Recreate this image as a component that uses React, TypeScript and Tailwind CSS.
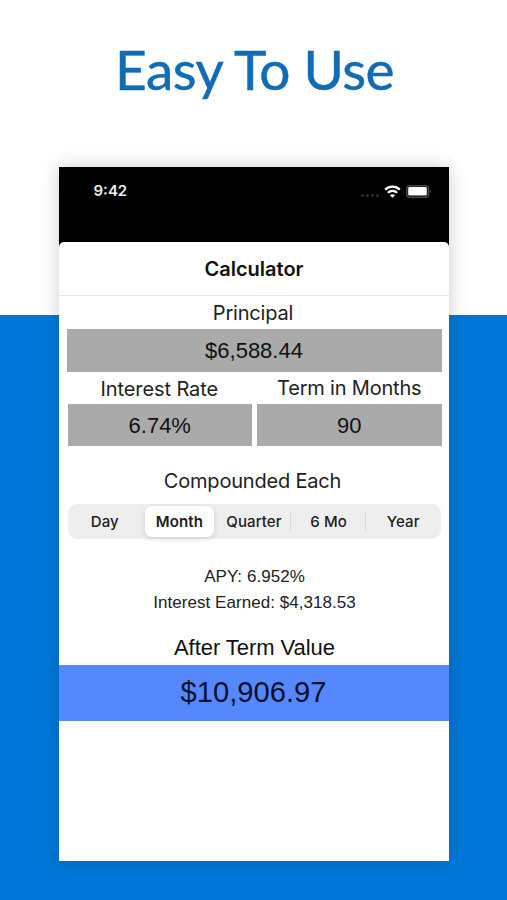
const periods = ['Day', 'Month', 'Quarter', '6 Mo', 'Year']

const sf = "font-['Inter','Liberation_Sans',sans-serif]"
const helvetica = "font-['Liberation_Sans',sans-serif]"

function StatusBar() {
  return (
    <div className="h-[83px] shrink-0 bg-black px-[18px] pt-[15px] text-white">
      <div className="flex h-[19px] items-center justify-between pl-[17px]">
        <span className={`${sf} text-[15px] font-semibold text-[#eee]`}>9:42</span>
        <div className="flex items-center">
          <div className="mt-[8px] mr-[5px] flex gap-[2px]">
            {[0, 1, 2, 3].map((dot) => (
              <span key={dot} className="size-[3px] rounded-full bg-[#303030]" />
            ))}
          </div>
          <svg className="h-[13px] w-[17px]" viewBox="0 0 17 13" fill="none" stroke="currentColor" strokeWidth="2.3">
            <path d="M1.2 4.6C5.3 .6 11.7 .6 15.8 4.6" />
            <path d="M3.9 7.8C6.5 5.2 10.5 5.2 13.1 7.8" />
            <path d="M8.5 12.8L6 10.2C7.4 8.8 9.6 8.8 11 10.2Z" fill="currentColor" stroke="none" />
          </svg>
          <svg className="ml-[5px] h-[13px] w-[25px]" viewBox="0 0 25 13" fill="none">
            <rect x=".8" y=".8" width="21.6" height="11.4" rx="3" stroke="#484848" strokeWidth="1.5" />
            <rect x="2.2" y="2" width="18.6" height="8.6" rx="1.4" fill="#fff" />
            <path d="M23.6 4.6C25 5.2 25 7.8 23.6 8.4Z" fill="#555" />
          </svg>
        </div>
      </div>
    </div>
  )
}

interface FieldProps {
  label: string
  value: string
  labelClass: string
}

function Field({ label, value, labelClass }: FieldProps) {
  return (
    <div className="flex flex-1 flex-col text-center">
      <div className={`${sf} h-8 text-[20px] text-[#222] ${labelClass}`}>{label}</div>
      <div className={`${helvetica} h-[42.5px] bg-[#aaa] text-[22px] leading-[44px] text-[#111]`}>{value}</div>
    </div>
  )
}

function PeriodPicker() {
  return (
    <div className="mr-2 ml-[9px] flex h-[35px] items-center rounded-[9px] bg-[#eeeeef]">
      {periods.map((period, i) => (
        <div
          key={period}
          className={`${sf} relative flex h-[31px] flex-1 items-center justify-center text-[15px] tracking-[0.1px] text-[#1c1c1c]`}
        >
          {period === 'Month' ? (
            <span className="flex h-[31px] w-[69px] items-center justify-center rounded-[7px] bg-white pt-[2px] font-semibold shadow-[0_2px_6px_rgba(0,0,0,0.13)]">
              {period}
            </span>
          ) : (
            <span className="pt-[2px] font-medium">{period}</span>
          )}
          {i > 2 && <span className="absolute top-[6px] -left-px h-[19px] w-px bg-[#dcdcde]" />}
        </div>
      ))}
    </div>
  )
}

export default function App() {
  return (
    <div className="flex h-[900px] w-[507px] flex-col items-center overflow-hidden bg-[linear-gradient(#fff_315px,#0078d9_315px)]">
      <h1 className="mt-[36px] h-[131px] pl-[2px] font-['Lato',sans-serif] text-[55px] leading-[66px] tracking-[-0.5px] text-[#116cb5] [-webkit-text-stroke:0.5px_#116cb5]">
        Easy To Use
      </h1>

      <div className="flex h-[694px] w-[390px] shrink-0 flex-col bg-white shadow-[0_0_18px_rgba(0,0,0,0.2)]">
        <StatusBar />
        <div className="-mt-2 flex flex-col rounded-t-[5px] bg-white">
          <div className={`${sf} h-[54px] border-b border-[#e6e6e6] pl-px text-center text-[20px] leading-[55px] font-semibold text-[#111]`}>
            Calculator
          </div>

          <div className="flex pt-px pr-[7px] pl-2">
            <Field label="Principal" value="$6,588.44" labelClass="pr-[2px] leading-[32px] tracking-[-0.2px]" />
          </div>
          <div className="flex gap-[5px] pr-[7px] pl-[9px]">
            <Field label="Interest Rate" value="6.74%" labelClass="pr-px leading-[34px] tracking-[-0.1px]" />
            <Field label="Term in Months" value="90" labelClass="leading-[32px] tracking-[-0.2px]" />
          </div>

          <div className={`${sf} mt-5 mb-[8px] pr-[2px] text-center text-[20px] leading-[30px] tracking-[-0.2px] text-[#222]`}>
            Compounded Each
          </div>
          <PeriodPicker />

          <div className={`${helvetica} mt-[25px] pl-[2px] text-center text-[17px] leading-[26px] tracking-[0.05px] text-[#222]`}>
            <p>APY: 6.952%</p>
            <p>Interest Earned: $4,318.53</p>
          </div>

          <div className={`${helvetica} mt-[17px] pl-[2px] text-center text-[22px] leading-[30px] tracking-[-0.05px] text-[#111]`}>
            After Term Value
          </div>
          <div className={`${helvetica} mt-[2px] h-[56px] bg-[#5688fd] text-center text-[29.2px] leading-[54px] text-[#050f2c]`}>
            $10,906.97
          </div>
        </div>
      </div>
    </div>
  )
}
